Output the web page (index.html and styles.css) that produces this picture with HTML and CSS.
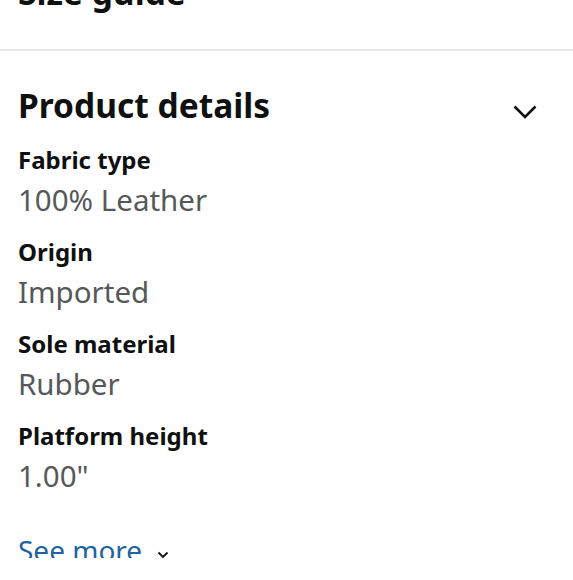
FILE: index.html
```html
<!DOCTYPE html>
<html lang="en">
<head>
<meta charset="utf-8">
<title>Product details</title>
<link rel="stylesheet" href="styles.css">
</head>
<body>
<div class="viewport">
  <section class="size-guide">
    <h2 class="section-title">Size guide</h2>
  </section>
  <hr class="divider">
  <section class="details">
    <div class="details-head">
      <h2 class="section-title">Product details</h2>
      <svg class="chevron" width="24" height="14" viewBox="0 0 24 14" aria-hidden="true">
        <path d="M1.5 1.5 L12 12 L22.5 1.5" fill="none" stroke="#0f1111" stroke-width="2.6"/>
      </svg>
    </div>
    <div class="detail-list">
      <div class="row">
        <div class="label">Fabric type</div>
        <div class="value">100% Leather</div>
      </div>
      <div class="row">
        <div class="label">Origin</div>
        <div class="value">Imported</div>
      </div>
      <div class="row">
        <div class="label">Sole material</div>
        <div class="value">Rubber</div>
      </div>
      <div class="row">
        <div class="label">Platform height</div>
        <div class="value">1.00"</div>
      </div>
      <div class="row">
        <div class="label">Closure type</div>
        <div class="value">Lace-Up</div>
      </div>
    </div>
    <a class="see-more" href="#"><span class="see-more-text">See more</span><svg class="mini-chevron" width="12" height="8" viewBox="0 0 12 8" aria-hidden="true"><path d="M1.5 1.5 L6 6 L10.5 1.5" fill="none" stroke="#0f1111" stroke-width="1.8"/></svg></a>
  </section>
</div>
</body>
</html>
```

FILE: styles.css
```css
html, body {
  margin: 0;
  padding: 0;
  background: #ffffff;
}

body {
  font-family: "Noto Sans", "Open Sans", sans-serif;
  color: #0f1111;
}

.viewport {
  width: 573px;
  height: 558px;
  overflow: hidden;
}

.size-guide {
  padding: 0 18px;
  margin-top: -28px;
  height: 77px;
}

.section-title {
  margin: 0;
  font-size: 33.5px;
  line-height: 40px;
  font-weight: 700;
  color: #0f1111;
}

.divider {
  margin: 0;
  border: 0;
  height: 2px;
  background: #e7e7e7;
}

.details {
  padding: 34px 36px 0 18px;
}

.details-head {
  display: flex;
  align-items: flex-start;
  justify-content: space-between;
}

.chevron {
  display: block;
  margin-top: 20px;
}

.detail-list {
  position: relative;
  margin-top: 20px;
  height: 385px;
  overflow: hidden;
  display: flex;
  flex-direction: column;
  gap: 17px;
}

.detail-list::after {
  content: "";
  position: absolute;
  left: 0;
  right: 0;
  bottom: 0;
  height: 22px;
  background: linear-gradient(to bottom, rgba(255,255,255,0.85), #ffffff 55%);
}

.label {
  font-size: 24px;
  line-height: 30px;
  font-weight: 700;
  color: #0f1111;
}

.value {
  margin-top: 5px;
  font-size: 29.5px;
  line-height: 40px;
  color: #565959;
}

.see-more {
  display: flex;
  align-items: flex-start;
  gap: 15px;
  color: #2162a1;
  text-decoration: none;
}

.see-more-text {
  font-size: 28px;
  line-height: 40px;
}

.mini-chevron {
  display: block;
  flex: none;
  margin-top: 21px;
}
```
